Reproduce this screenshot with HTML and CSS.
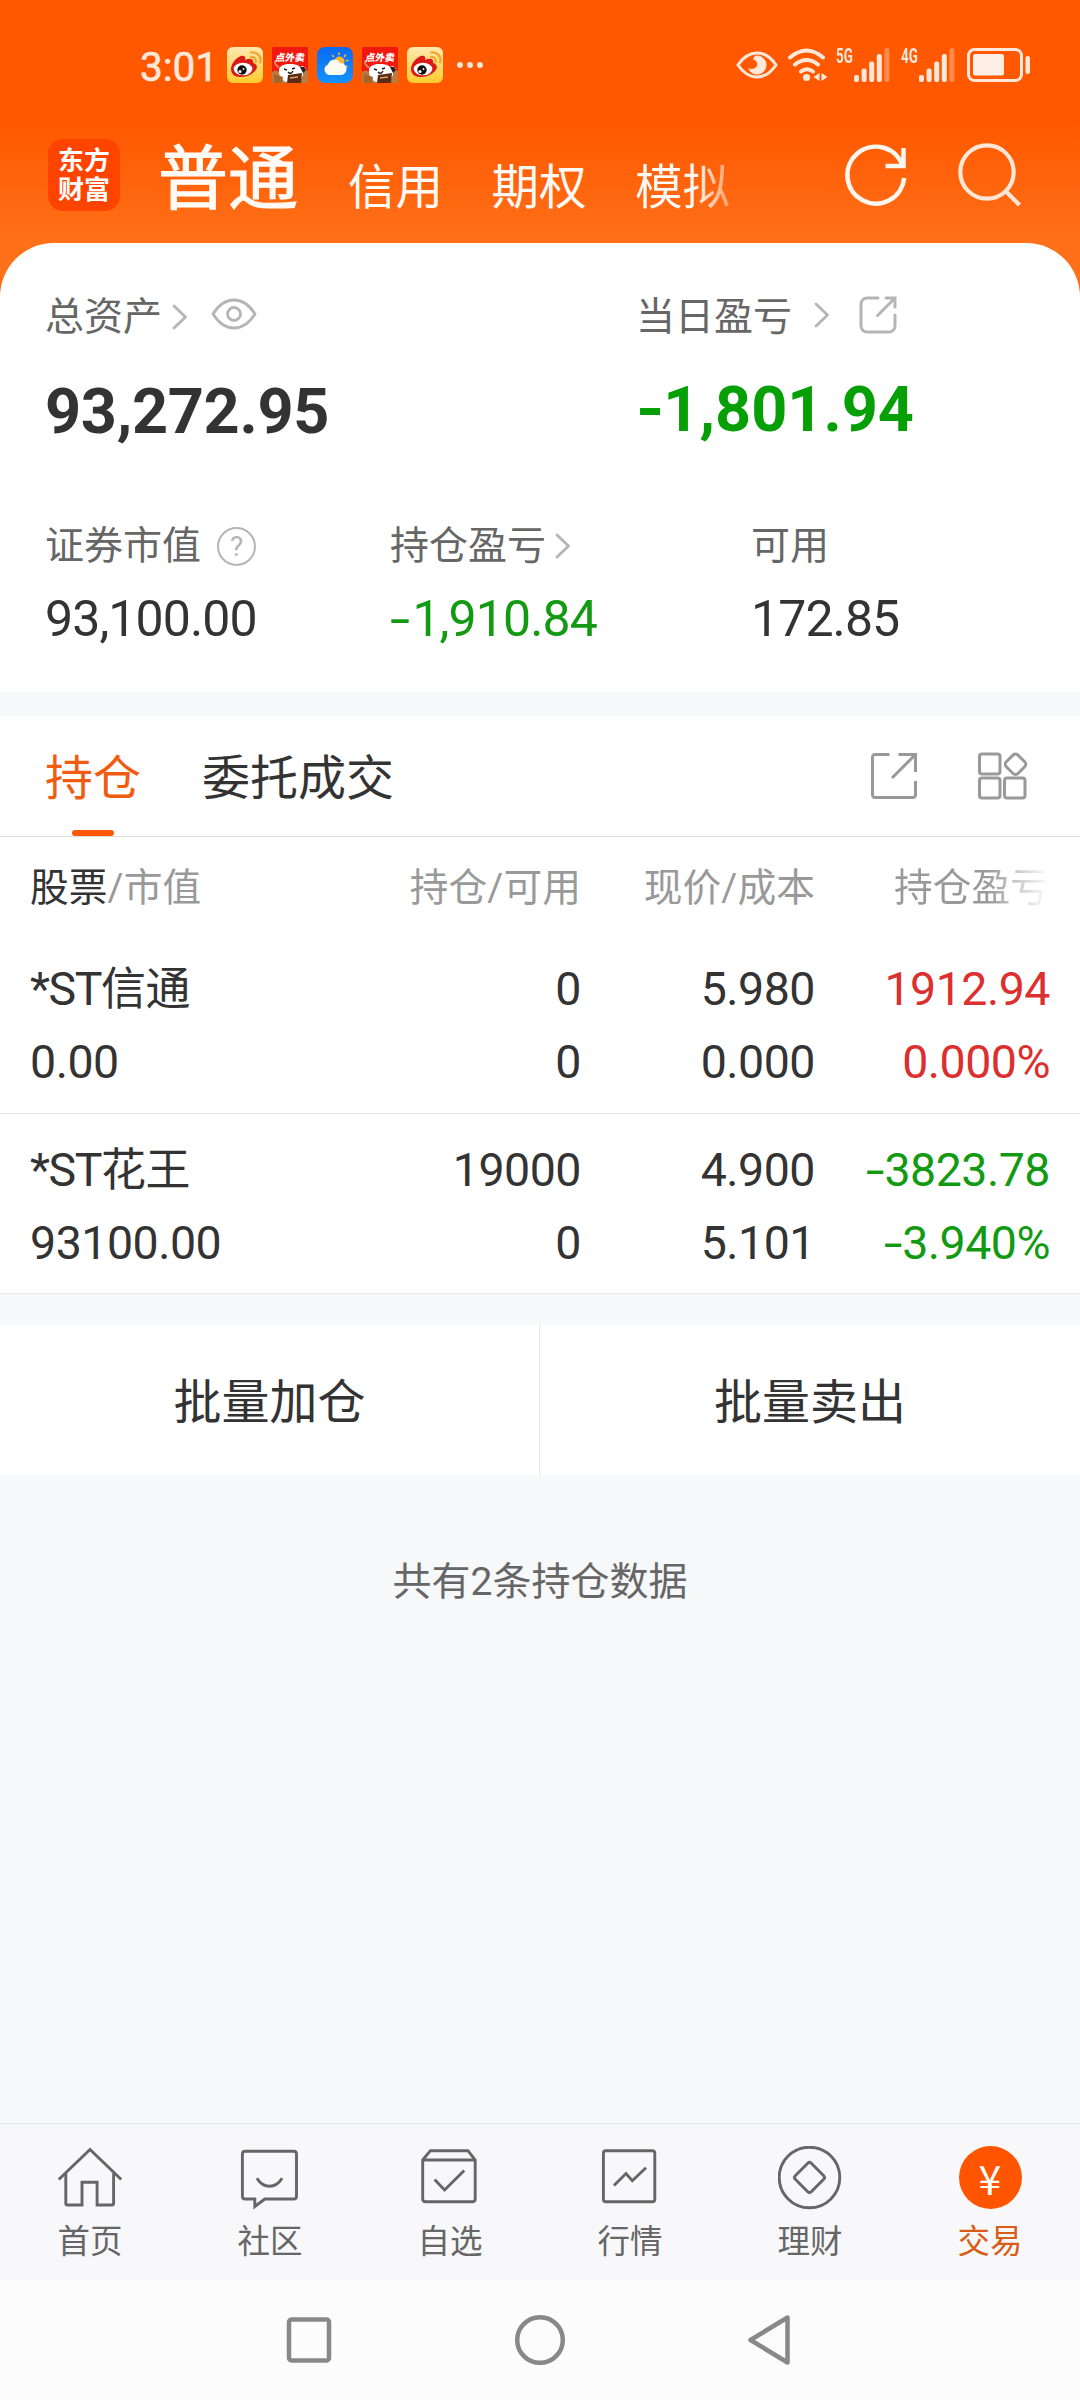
FILE: index.html
```html
<!DOCTYPE html>
<html lang="zh-CN">
<head>
<meta charset="utf-8">
<title>交易</title>
<link rel="stylesheet" href="styles.css">
</head>
<body>
<svg class="defs" aria-hidden="true">
  <defs>
    <linearGradient id="gold" x1="0" y1="0" x2="0" y2="1"><stop offset="0" stop-color="#ffe9b0"/><stop offset="1" stop-color="#ffcb2e"/></linearGradient>
    <linearGradient id="sky" x1="0" y1="0" x2="0" y2="1"><stop offset="0" stop-color="#0a6af0"/><stop offset="1" stop-color="#1592ff"/></linearGradient>
    <symbol id="weibo" viewBox="0 0 36 36">
      <rect width="36" height="36" rx="6" fill="url(#gold)"/>
      <path d="M4 22C4 15 13 7 17 9c2 1 1 3 1 4 4-2 9-2 8 3 5 1 5 6 1 9-4 4-10 5-14 5-5 0-9-3-9-8z" fill="#dd1818"/>
      <ellipse cx="16" cy="22" rx="9.3" ry="6.3" fill="#fff"/>
      <circle cx="15" cy="23" r="4.7" fill="#111"/><circle cx="13" cy="24.5" r="1.5" fill="#fff"/><circle cx="16.5" cy="22" r=".9" fill="#fff"/>
      <path d="M24 5.500c6-1 11 4 9 10M24 10c3-.5 5.500 2 4.700 5" fill="none" stroke="#f6a52c" stroke-width="2.200" stroke-linecap="round"/>
    </symbol>
    <symbol id="delivery" viewBox="0 0 36 36">
      <rect width="36" height="36" rx="1.500" fill="#f2180f"/>
      <path d="M0 25q4-3 7 0l22-1q4-3 7 0v12H0z" fill="#bd7a3e"/>
      <path d="M3 14c-1 4 2 4 4 7" fill="none" stroke="#e98a52" stroke-width="2"/>
      <path d="M7 25c-1-6 5-8 10-8 4 0 8 0 11 3l3-1 3 3-3 3c1 6-5 10-9 10H14c-3-1-7-5-7-10z" fill="#fff"/>
      <path d="M28 20l4 0 2 3-3 3z" fill="#272020"/>
      <path d="M12 22l3 1M20 22l3-1M16 25q3 3 5-1" stroke="#271b1b" stroke-width="1.500" fill="none"/>
      <path d="M16 28l14-2-1 10H15z" fill="#5c2b13"/><path d="M18 31l8-1" stroke="#d9a667" stroke-width="1.500"/>
      <path d="M2 27l9 3-1 6H2z" fill="#a76428"/>
      <text x="18" y="13.800" text-anchor="middle" class="promo" transform="skewX(-8) translate(1.500 0)">点外卖</text>
    </symbol>
    <symbol id="bars" viewBox="0 0 36 34">
      <g fill="#ffe8da"><rect x="0" y="27" width="5" height="7" rx="2"/><rect x="7.600" y="20.500" width="5" height="13.500" rx="2"/><rect x="15.200" y="13.500" width="5" height="20.500" rx="2"/><rect x="22.800" y="6" width="5" height="28" rx="2"/></g>
      <rect x="30.400" y="0" width="5" height="34" rx="2" fill="#ff8a4c"/>
    </symbol>
    <symbol id="chevron" viewBox="0 0 16 26"><path d="M2 2l11.500 11L2 24" fill="none" stroke="#b5b5b5" stroke-width="2.800" stroke-linecap="round" stroke-linejoin="round"/></symbol>
  </defs>
</svg>

<header class="top">
  <div class="status">
    <span class="clock">3:01</span>
    <div class="notices">
      <svg><use href="#weibo"/></svg>
      <svg><use href="#delivery"/></svg>
      <svg viewBox="0 0 36 36"><rect width="36" height="36" rx="8" fill="url(#sky)"/><g stroke="#ffb937" stroke-width="1.500" stroke-linecap="round"><path d="M22 6v1.500M28.500 8l-1 1.500M31 13.500h-1.500M30 20l-1-1M15.500 8.500l1 1"/></g><circle cx="22.500" cy="14.500" r="5" fill="#ffb52b"/><path d="M12 28a5.500 5.500 0 0 1-1-10.500 6.500 6.500 0 0 1 12-1.500 6 6 0 0 1 1 12z" fill="#fffbf0"/></svg>
      <svg><use href="#delivery"/></svg>
      <svg><use href="#weibo"/></svg>
    </div>
    <svg class="more" width="28" height="8" viewBox="0 0 28 8" fill="#ffe8da"><circle cx="4" cy="4" r="2.900"/><circle cx="14" cy="4" r="2.900"/><circle cx="24" cy="4" r="2.900"/></svg>
    <div class="signals">
      <svg class="s-eye" width="42" height="28" viewBox="0 0 42 28"><path d="M2 14C8 5 14 2 21 2s13 3 19 12c-6 9-12 12-19 12S8 23 2 14z" fill="none" stroke="#ffe8da" stroke-width="3"/><path d="M21 4.500a9.500 9.500 0 1 1-9 12.500c3 2 8 1 9-2.500.8-3-1-5.500-4-6 .8-2.500 2-4 4-4z" fill="#ffe8da"/></svg>
      <svg class="s-wifi" width="42" height="34" viewBox="0 0 42 34"><g fill="none" stroke="#ffe8da" stroke-width="4" stroke-linecap="round"><path d="M3 9.500Q19.500-4.500 36 9.500M8 16.500q11.500-9 23 0M14 23.500q6-4.500 12 0"/></g><circle cx="19.500" cy="29.500" r="3.600" fill="#ffe8da"/><path d="M32.500 25v8L26.500 29zM34.500 25v8l6-4z" fill="#ffe8da"/></svg>
      <span class="gen">5G</span><svg class="s-bars"><use href="#bars"/></svg>
      <span class="gen gen-4">4G</span><svg class="s-bars"><use href="#bars"/></svg>
      <svg class="s-batt" width="64" height="34" viewBox="0 0 64 34"><rect x="1.500" y="1.500" width="53" height="31" rx="6" fill="none" stroke="#ffe8da" stroke-width="3"/><rect x="6" y="6" width="31" height="21.500" rx="2.500" fill="#ffeee6"/><rect x="58.500" y="8" width="4.500" height="18" rx="2.200" fill="#ffe8da"/></svg>
    </div>
  </div>
  <nav class="accounts">
    <div class="logo"><span>东方</span><span>财富</span></div>
    <div class="account-tabs">
      <a class="account active">普通</a><a class="account">信用</a><a class="account">期权</a><a class="account fade-tab">模拟</a>
    </div>
    <svg class="refresh" width="68" height="70" viewBox="0 0 68 70" fill="none" stroke="#fff6ee" stroke-width="4.500"><path d="M64.200 37A28.500 28.500 0 1 1 63 25.500"/><path d="M63.500 7v18H45.500"/></svg>
    <svg class="search" width="68" height="70" viewBox="0 0 68 70" fill="none" stroke="#ffe6d6" stroke-width="4.200"><circle cx="32" cy="32" r="26.700"/><path d="M50.500 51l14 14"/></svg>
  </nav>
</header>

<main>
  <section class="summary">
    <div class="totals">
      <div class="metric">
        <div class="label">总资产<svg class="chev c1"><use href="#chevron"/></svg><svg class="eye" width="46" height="32" viewBox="0 0 46 32" fill="none" stroke="#b5b5b5" stroke-width="2.800"><path d="M2 16C7 8 14 2 23 2s16 6 21 14c-5 8-12 14-21 14S7 24 2 16z" stroke-linejoin="round"/><circle cx="23" cy="16" r="6.500"/></svg></div>
        <div class="big">93,272.95</div>
      </div>
      <div class="metric">
        <div class="label">当日盈亏<svg class="chev c2"><use href="#chevron"/></svg><svg class="share" width="38" height="38" viewBox="0 0 38 38" fill="none" stroke="#b5b5b5" stroke-width="3" stroke-linecap="round"><path d="M19 2H8a6 6 0 0 0-6 6v22a6 6 0 0 0 6 6h22a6 6 0 0 0 6-6V19"/><path d="M27 2h9v9M36 2L18.500 19.500"/></svg></div>
        <div class="big down"><span class="minus">-</span>1,801.94</div>
      </div>
    </div>
    <div class="details">
      <div class="metric">
        <div class="label">证券市值<span class="help">?</span></div>
        <div class="value">93,100.00</div>
      </div>
      <div class="metric">
        <div class="label">持仓盈亏<svg class="chev c3"><use href="#chevron"/></svg></div>
        <div class="value down"><span class="minus">-</span>1,910.84</div>
      </div>
      <div class="metric">
        <div class="label">可用</div>
        <div class="value">172.85</div>
      </div>
    </div>
  </section>

  <section class="positions">
    <div class="tabs">
      <a class="tab current">持仓</a>
      <a class="tab">委托成交</a>
      <svg class="t-share" width="46" height="46" viewBox="0 0 46 46" fill="none" stroke="#999" stroke-width="3"><path d="M18.500 1.500H4a2.500 2.500 0 0 0-2.500 2.500v38A2.500 2.500 0 0 0 4 44.500h38a2.500 2.500 0 0 0 2.500-2.500V28"/><path d="M27.500 1.500h17V19M44 2L21 25"/></svg>
      <svg class="t-grid" width="50" height="48" viewBox="0 0 50 48" fill="none" stroke="#999" stroke-width="3"><rect x="1.500" y="2" width="20.500" height="20" rx="2.500"/><rect x="1.500" y="26" width="20.500" height="20" rx="2.500"/><rect x="26.500" y="26" width="20.500" height="20" rx="2.500"/><rect x="29.300" y="4" width="16.500" height="16.500" rx="3.500" transform="rotate(45 37.500 12.200)"/></svg>
    </div>
    <div class="row head">
      <div><b>股票</b>/市值</div><div>持仓/可用</div><div>现价/成本</div><div class="head-fade">持仓盈亏</div>
    </div>
    <div class="row">
      <div><span class="st">*ST</span><span class="name">信通</span><br>0.00</div><div>0<br>0</div><div>5.980<br>0.000</div><div class="up">1912.94<br>0.000%</div>
    </div>
    <div class="row last">
      <div><span class="st">*ST</span><span class="name">花王</span><br>93100.00</div><div>19000<br>0</div><div>4.900<br>5.101</div><div class="down"><span class="minus">-</span>3823.78<br><span class="minus">-</span>3.940%</div>
    </div>
  </section>

  <section class="actions"><a>批量加仓</a><a>批量卖出</a></section>
  <p class="count">共有2条持仓数据</p>
</main>

<nav class="tabbar">
  <a><svg viewBox="0 0 64 64"><path d="M.8 33.500L32 3.500l31.200 30M7.800 27.500V57.500Q7.800 59 9.300 59H24V36.300h15.100V59h15q1.500 0 1.500-1.500v-30"/></svg>首页</a>
  <a><svg viewBox="0 0 64 64"><path d="M16.800 53H7.200q-2.800 0-2.800-2.800V8.100q0-2.800 2.800-2.800h48.500q2.800 0 2.800 2.800v42.100q0 2.800-2.800 2.800H26.800l-10 7.500zM18.900 32.300q5 8 12.600 8t12.600-8"/></svg>社区</a>
  <a><svg viewBox="0 0 64 64"><path d="M4.700 14L12.400 4.700H50L57.200 14v38.700q0 3-3 3H7.700q-3 0-3-3zM4.700 14h52.500M16.600 33.500l10 10.500 19.600-19.500"/></svg>自选</a>
  <a><svg viewBox="0 0 64 64"><rect x="5.400" y="4.700" width="51.400" height="51" rx="2.500"/><path d="M16 39.500l12-12 6.300 7.200 13.700-13"/></svg>行情</a>
  <a><svg viewBox="0 0 64 64"><circle cx="31.500" cy="31.500" r="30.300"/><rect x="20.200" y="20.200" width="22.600" height="22.600" rx="2.500" transform="rotate(45 31.500 31.500)"/></svg>理财</a>
  <a class="on"><span class="coin">¥</span>交易</a>
</nav>
<div class="sysnav">
  <svg width="46" height="50" viewBox="0 0 46 50"><rect x="3" y="4.500" width="40" height="41" rx="2.500"/></svg>
  <svg width="52" height="52" viewBox="0 0 52 52"><circle cx="26" cy="26" r="22.800"/></svg>
  <svg width="46" height="52" viewBox="0 0 46 52"><path d="M39.500 3.500v45L2.500 26z" stroke-linejoin="round"/></svg>
</div>
</body>
</html>
```
FILE: styles.css
```css
* { box-sizing: border-box; }
body {
  margin: 0;
  width: 1080px;
  height: 2400px;
  overflow: hidden;
  display: flex;
  flex-direction: column;
  background: #f7f8fa;
  color: #333;
  font-family: Roboto, "Noto Sans CJK SC", sans-serif;
}
svg { display: block; flex: none; }
.defs { position: absolute; width: 0; height: 0; }
.down { color: #139a13; }
.up { color: #dc2f2f; }

/* Header */
.top {
  height: 297px;
  margin-bottom: -54px;
  flex: none;
  background: linear-gradient(#ff5800 0, #ff5800 120px, #ff7019 243px);
}
.status { height: 130px; display: flex; align-items: center; padding: 0 49px 0 140px; }
.clock { width: 87px; font-size: 40.500px; color: #ffe8da; line-height: 40px; margin-top: 4px; -webkit-text-stroke: .6px #ffe8da; }
.notices { display: flex; gap: 9px; }
.notices svg { width: 36px; height: 36px; }
.promo { font: 900 9.800px "Noto Sans CJK SC", sans-serif; fill: #fff; }
.more { margin-left: 13px; }
.signals { margin-left: auto; display: flex; }
.s-eye { margin: 3px 9px 0 0; }
.s-bars { width: 36px; height: 34px; }
.gen {
  width: 18px; margin-left: 7px;
  font: 700 20.500px/20px Roboto, sans-serif;
  color: #ffe8da; margin-top: -2px;
  transform: scaleX(.65); transform-origin: left;
}
.gen-4 { margin-left: 11px; }
.s-batt { margin-left: 12px; }
.accounts { display: flex; height: 113px; padding-left: 48px; }
.logo {
  width: 72px; height: 72px; margin-top: 9px; border-radius: 15px; background: #ff4400;
  display: flex; flex-direction: column; align-items: center; justify-content: center;
  color: #fff; font-weight: 700; font-size: 26px; line-height: 29.500px; padding-top: 2px;
}
.account-tabs { display: flex; width: 688px; padding-left: 37px; color: #fffaf5; }
.account { font-size: 47.500px; line-height: 60px; margin-top: 28px; margin-right: 48.500px; }
.account.active { font-size: 70px; line-height: 80px; margin: 10px 50px 0 1px; -webkit-text-stroke: 1.200px #fffaf5; }
.account.fade-tab {
  color: transparent; margin-right: 0;
  background: linear-gradient(90deg, #fffaf5 62%, #ff9e66 100%);
  -webkit-background-clip: text; background-clip: text;
}
.refresh { margin: 11px 0 0 32px; }
.search { margin: 10px 0 0 47px; }

/* Account summary */
main { flex: 1; display: flex; flex-direction: column; position: relative; }
.summary { height: 449px; background: #fff; border-radius: 54px 54px 0 0; padding: 44px 45px 0; }
.totals { display: grid; grid-template-columns: 591px 1fr; }
.details { display: grid; grid-template-columns: 345px 361px 1fr; margin-top: 69px; }
.label { display: flex; align-items: center; height: 60px; font-size: 39px; line-height: 60px; color: #666; }
.chev { width: 16px; height: 26px; }
.c1 { margin-left: 10px; }
.c2 { margin: -4px 0 0 22px; }
.c3 { margin-left: 9px; }
.eye { margin: -7px 0 0 23px; }
.share { margin: -4px 0 0 29px; }
.help {
  width: 39px; height: 39px; border: 2.500px solid #b5b5b5; border-radius: 50%; margin-left: 16px;
  font-size: 28px; line-height: 35px; text-align: center; color: #b5b5b5;
}
.big { font-size: 63px; font-weight: 700; line-height: 70px; margin-top: 30px; letter-spacing: -.3px; }
.big.down { color: #06a006; margin-top: 28px; letter-spacing: 0; }
.value { font-size: 50px; line-height: 60px; margin-top: 13px; letter-spacing: -.9px; }
.minus { display: inline-block; transform: scaleX(1.450); transform-origin: left; margin-right: .13em; }
.value .minus { margin-right: .19em; }
.big .minus { transform: scaleX(1.150); margin-right: .04em; }

/* Positions */
.positions { margin-top: 24px; background: #fff; }
.tabs { height: 121px; display: flex; border-bottom: 1px solid #ddd; padding: 0 52px 0 45px; }
.tab { font-size: 48px; line-height: 125px; margin-right: 61px; position: relative; }
.tab.current { color: #f25c10; }
.tab.current::after {
  content: ""; position: absolute; left: 27px; top: 114px; width: 42px; height: 6px;
  border-radius: 3px; background: #fd5808;
}
.t-share { margin: 37px 0 0 auto; }
.t-grid { margin: 36px 0 0 61px; }
.row {
  display: grid; grid-template-columns: 301px 250px 234px 235px;
  height: 181px; padding: 20px 30px 0 30px; border-bottom: 1px solid #e8e8ea;
  font-size: 46.500px; line-height: 73px; letter-spacing: -.5px;
}
.row.last { height: 180px; }
.row > div { text-align: right; white-space: nowrap; }
.row > div:first-child { text-align: left; }
.st { letter-spacing: -1.500px; }
.name { font-size: 45px; }
.row.head { height: 96px; padding-top: 21px; border: 0; font-size: 38.700px; line-height: 60px; color: #999; letter-spacing: .1px; }
.head b { font-weight: 400; color: #333; }
.row > .head-fade {
  text-align: left; padding-left: 79px; color: transparent;
  background: linear-gradient(90deg, #999 73%, #fff 100%);
  -webkit-background-clip: text; background-clip: text;
}
.actions { display: flex; height: 150px; margin-top: 31px; background: #fff; }
.actions a { width: 540px; text-align: center; font-size: 48px; line-height: 156px; }
.actions a:first-child { border-right: 1px solid #e8e8ea; }
.count { margin: 77px 0 0; text-align: center; font-size: 39px; line-height: 60px; color: #666; }

/* Bottom navigation */
.tabbar { display: flex; height: 157px; border-top: 1px solid #e2e3e5; background: #f8f8fa; }
.tabbar a {
  flex: 1; display: flex; flex-direction: column; align-items: center; padding-top: 22px;
  font-size: 32.500px; line-height: 40px; color: #666;
}
.tabbar svg { width: 64px; height: 64px; margin-bottom: 12px; fill: none; stroke: #666; stroke-width: 2.900; }
.tabbar .on { color: #d95c17; }
.coin {
  width: 63px; height: 63px; margin-bottom: 13px; border-radius: 50%; background: #ff5500;
  color: #fff; font: 400 41px/62px "Noto Sans CJK SC", sans-serif; text-align: center;
}
.sysnav { display: flex; height: 120px; background: #fcfcfc; align-items: center; justify-content: center; gap: 182px; }
.sysnav svg { fill: none; stroke: #888; stroke-width: 4.500; }
```
